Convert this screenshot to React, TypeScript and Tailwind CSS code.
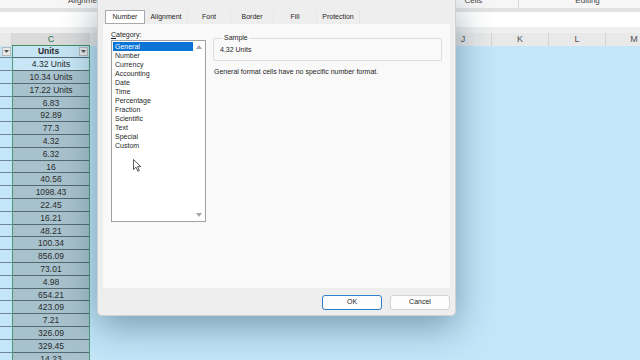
const values = [
  '4.32 Units', '10.34 Units', '17.22 Units', '6.83', '92.89', '77.3', '4.32', '6.32',
  '16', '40.56', '1098.43', '22.45', '16.21', '48.21', '100.34', '856.09', '73.01',
  '4.98', '654.21', '423.09', '7.21', '326.09', '329.45', '14.23',
]

const categories = [
  'General', 'Number', 'Currency', 'Accounting', 'Date', 'Time',
  'Percentage', 'Fraction', 'Scientific', 'Text', 'Special', 'Custom',
]

const tabs = ['Number', 'Alignment', 'Font', 'Border', 'Fill', 'Protection']

const uiFont = 'font-["Liberation_Sans",Arial,sans-serif]'

function FilterButton() {
  return (
    <div className="flex h-[9px] w-[9px] shrink-0 items-center justify-center border border-[#b9b9b9] bg-[#e9e9e9]">
      <svg width="5" height="3" viewBox="0 0 5 3">
        <path d="M0 0h5L2.5 3z" fill="#555" />
      </svg>
    </div>
  )
}

function Sheet() {
  return (
    <div className="flex w-full flex-col bg-[#c3e6f9]">
      {/* ribbon group labels, cut off at top */}
      <div className="relative h-[8px] shrink-0 overflow-hidden bg-[#f6f6f6] text-[8px] leading-[8px] text-[#444]">
        <div className="-mt-[3px] flex">
          <span className="ml-[68px] shrink-0">Alignment</span>
          <span className="ml-[361px] shrink-0">Cells</span>
          <span className="ml-[36px] h-[12px] shrink-0 border-l border-[#d8d8d8]" />
          <span className="ml-[56px] shrink-0">Editing</span>
        </div>
      </div>
      <div className="h-[4px] shrink-0 bg-[#e2e2e2]" />
      <div className="h-[15px] shrink-0 bg-white" />
      <div className="h-[6px] shrink-0 bg-[#f0f0f0]" />
      {/* column headers */}
      <div className="flex h-[12.5px] shrink-0 bg-[#e9e9e9] text-[9px] leading-[12.5px] text-[#555]">
        <div className="w-[12px] shrink-0 border-r border-[#d4d4d4]" />
        <div className="w-[78px] shrink-0 border-b border-[#3f8e66] bg-[#dadada] text-center text-[#217346]">C</div>
        <div className="w-[345px] shrink-0" />
        {['J', 'K', 'L', 'M'].map((c) => (
          <div key={c} className="w-[57px] shrink-0 border-r border-[#d4d4d4] text-center">
            {c}
          </div>
        ))}
      </div>
      {/* rows */}
      <div className="flex shrink-0">
        <div className="flex w-[12px] shrink-0 flex-col">
          <div className="flex h-[12.8px] shrink-0 items-center justify-center border-b border-[#6f8792] bg-[#c3e4f5]">
            <FilterButton />
          </div>
          {values.map((v) => (
            <div key={v} className="h-[12.8px] shrink-0 border-b border-[#6f8792] bg-[#c3e6f9]" />
          ))}
        </div>
        <div className="flex w-[78px] shrink-0 flex-col border-x border-[#4f9a78] text-center text-[8.5px] leading-[12px] text-[#2a2a2a]">
          <div className="flex h-[12.8px] shrink-0 items-center border-b border-[#55686f] bg-[#c5e4f4] pl-[5px] pr-[1px]">
            <span className="flex-1 font-bold">Units</span>
            <FilterButton />
          </div>
          {values.map((v, i) => (
            <div
              key={v}
              className={
                i === 0
                  ? 'h-[12.8px] shrink-0 border-b border-[#55686f] bg-[#c8e6f5]'
                  : 'h-[12.8px] shrink-0 border-b border-[#55686f] bg-[#a8c2cd]'
              }
            >
              {v}
            </div>
          ))}
        </div>
      </div>
    </div>
  )
}

function Cursor() {
  return (
    <svg className="absolute left-[133px] top-[159px]" width="9" height="13" viewBox="0 0 9 13">
      <path d="M0.5 0.5v10l2.5-2.3 1.8 4 1.5-.7-1.8-3.9h3.3z" fill="white" stroke="#333" strokeWidth="0.8" />
    </svg>
  )
}

function FormatDialog() {
  return (
    <div
      className={`absolute left-[97px] top-0 flex h-[316px] w-[359px] flex-col rounded-b-[5px] border border-t-0 border-[#d2d2d2] bg-[#eeeeee] shadow-[0_10px_36px_rgba(20,60,80,0.45)] ${uiFont} text-[7px] text-[#1f1f1f]`}
    >
      {/* tabs */}
      <div className="ml-[7px] mt-[10px] flex h-[14px]">
        {tabs.map((t, i) => (
          <div
            key={t}
            className={
              i === 0
                ? 'flex w-[40px] items-center justify-center border border-[#a8a8a8] bg-white'
                : 'flex w-[43px] items-center justify-center border-r border-[#e6e6e6]'
            }
          >
            {t}
          </div>
        ))}
      </div>
      {/* panel */}
      <div className="mx-[5px] flex h-[264px] flex-col bg-[#f9f9f9] px-[8px] pt-[6px]">
        <div className="flex gap-[7px]">
          <div className="flex w-[95px] flex-col">
            <div className="h-[10px] leading-[9px]">
              <span className="underline">C</span>ategory:
            </div>
            <div className="relative h-[182px] border border-[#a0a0a0] bg-white p-px">
              <div className="flex flex-col pr-[11px]">
                {categories.map((c, i) => (
                  <div
                    key={c}
                    className={
                      i === 0
                        ? 'h-[9px] bg-[#0a74d6] pl-[2px] leading-[9px] text-white'
                        : 'h-[9px] pl-[2px] leading-[9px]'
                    }
                  >
                    {c}
                  </div>
                ))}
              </div>
              <svg className="absolute right-[3px] top-[4px]" width="6" height="4" viewBox="0 0 6 4">
                <path d="M3 0L6 4H0z" fill="#a6a6a6" />
              </svg>
              <svg className="absolute bottom-[4px] right-[3px]" width="6" height="4" viewBox="0 0 6 4">
                <path d="M0 0h6L3 4z" fill="#a6a6a6" />
              </svg>
            </div>
          </div>
          <div className="flex flex-1 flex-col pt-[4px]">
            <fieldset className="h-[27px] rounded-[2px] border border-[#dedede] pl-[6px]">
              <legend className="ml-[3px] px-[1px] leading-[8px]">Sample</legend>
              <div className="mt-[3px] leading-[9px]">4.32 Units</div>
            </fieldset>
            <div className="mt-[6px] pl-[1px] leading-[9px]">
              General format cells have no specific number format.
            </div>
          </div>
        </div>
      </div>
      {/* buttons */}
      <div className="mr-[5px] mt-[7px] flex justify-end gap-[8px]">
        <button className="h-[15px] w-[60px] rounded-[3px] border border-[#2f7fc9] bg-[#fdfdfd] text-[7px]">
          OK
        </button>
        <button className="h-[15px] w-[60px] rounded-[3px] border border-[#d3d3d3] bg-[#fdfdfd] text-[7px]">
          Cancel
        </button>
      </div>
    </div>
  )
}

export default function App() {
  return (
    <div className={`relative h-[360px] w-[640px] overflow-hidden bg-[#c3e6f9] ${uiFont}`}>
      <Sheet />
      <FormatDialog />
      <Cursor />
    </div>
  )
}
